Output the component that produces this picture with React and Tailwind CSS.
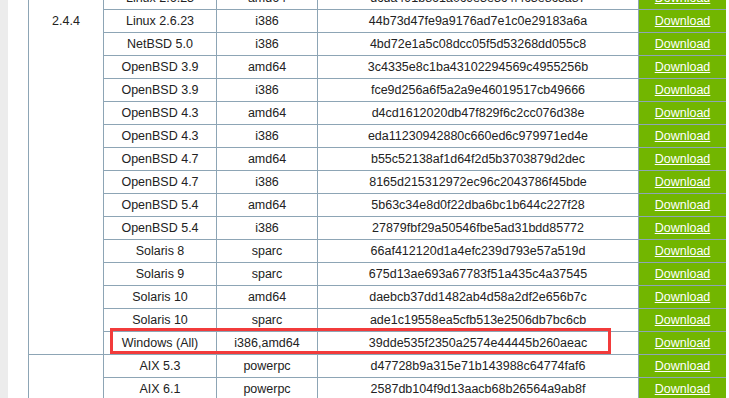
const rows = [
    ["Linux 2.6.23", "amd64", "dcda491b861a0c9e3e3c4f4c3e8c3a87"],
    ["Linux 2.6.23", "i386", "44b73d47fe9a9176ad7e1c0e29183a6a"],
    ["NetBSD 5.0", "i386", "4bd72e1a5c08dcc05f5d53268dd055c8"],
    ["OpenBSD 3.9", "amd64", "3c4335e8c1ba43102294569c4955256b"],
    ["OpenBSD 3.9", "i386", "fce9d256a6f5a2a9e46019517cb49666"],
    ["OpenBSD 4.3", "amd64", "d4cd1612020db47f829f6c2cc076d38e"],
    ["OpenBSD 4.3", "i386", "eda11230942880c660ed6c979971ed4e"],
    ["OpenBSD 4.7", "amd64", "b55c52138af1d64f2d5b3703879d2dec"],
    ["OpenBSD 4.7", "i386", "8165d215312972ec96c2043786f45bde"],
    ["OpenBSD 5.4", "amd64", "5b63c34e8d0f22dba6bc1b644c227f28"],
    ["OpenBSD 5.4", "i386", "27879fbf29a50546fbe5ad31bdd85772"],
    ["Solaris 8", "sparc", "66af412120d1a4efc239d793e57a519d"],
    ["Solaris 9", "sparc", "675d13ae693a67783f51a435c4a37545"],
    ["Solaris 10", "amd64", "daebcb37dd1482ab4d58a2df2e656b7c"],
    ["Solaris 10", "sparc", "ade1c19558ea5cfb513e2506db7bc6cb"],
    ["Windows (All)", "i386,amd64", "39dde535f2350a2574e44445b260aeac"],
]

const rows2 = [
    ["AIX 5.3", "powerpc", "d47728b9a315e71b143988c64774faf6"],
    ["AIX 6.1", "powerpc", "2587db104f9d13aacb68b26564a9ab8f"],
]

function Row({os, arch, hash}) {
    return (
        <>
            <div className="border-l border-t border-[#8da5b5] flex items-center justify-center">{os}</div>
            <div className="border-l border-t border-[#8da5b5] flex items-center justify-center">{arch}</div>
            <div className="border-l border-t border-[#8da5b5] flex items-center justify-center">{hash}</div>
            <div className="border-l border-t border-[#8da5b5] bg-[#72b600] flex items-center justify-center">
                <a href="#" className="text-white underline">Download</a>
            </div>
        </>
    )
}

export default function App() {
    return (
        <div className="flex w-[729px] h-[398px] overflow-hidden bg-white font-['Liberation_Sans',Arial,sans-serif] text-[12.5px] text-[#222]">
            <div className="w-[8px] shrink-0 bg-[#ececec]"></div>
            <div className="relative pl-[20px]">
                <div className="grid grid-cols-[75px_113px_101px_321px_88px] auto-rows-[23px] -mt-[14px]">
                    <div className="row-span-16 border-l border-t border-[#8da5b5] flex justify-center pt-[25px]">2.4.4</div>
                    {rows.map((r, i) => <Row key={i} os={r[0]} arch={r[1]} hash={r[2]}/>)}
                    <div className="row-span-2 border-l border-t border-[#8da5b5]"></div>
                    {rows2.map((r, i) => <Row key={i} os={r[0]} arch={r[1]} hash={r[2]}/>)}
                </div>
                {/* highlight box */}
                <div className="absolute left-[102px] top-[328px] w-[501px] h-[26px] border-[3px] border-[#f23b3b]"></div>
            </div>
        </div>
    )
}
